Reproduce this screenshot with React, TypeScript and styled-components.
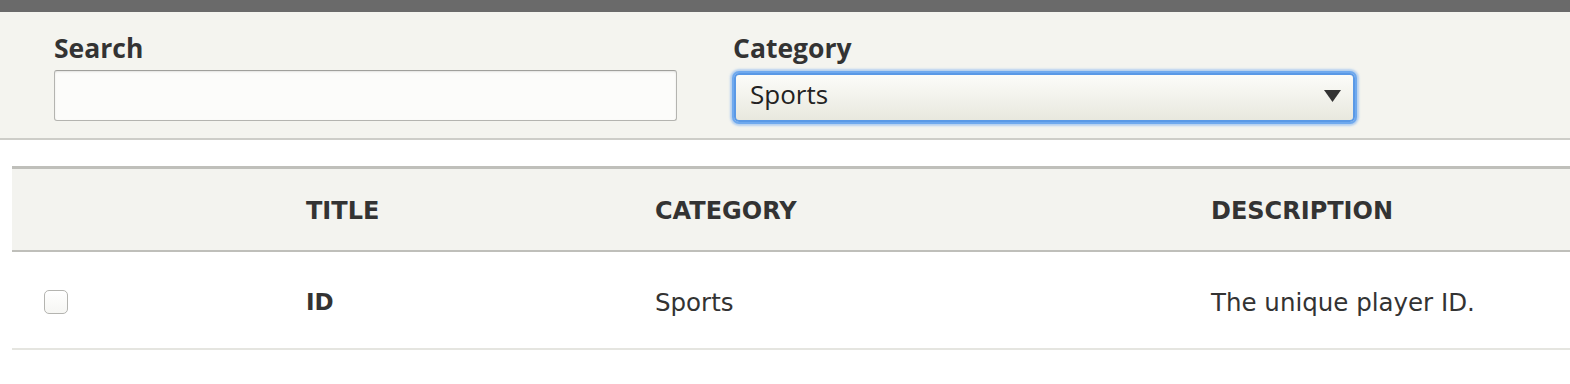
import React from "react";
import styled, { createGlobalStyle } from "styled-components";

const Global = createGlobalStyle`
  html, body { margin: 0; padding: 0; background: #ffffff; }
  body { font-family: "DejaVu Sans", sans-serif; color: #333333; }
  * { box-sizing: border-box; }
`;

const TopBar = styled.div`
  height: 12px;
  background: #6a6a6a;
`;

const Filters = styled.form`
  display: flex;
  align-items: flex-start;
  gap: 56px;
  background: #f4f4ef;
  padding: 20px 0 16px 54px;
  border-bottom: 2px solid #cdcdc8;
  height: 128px;
`;

const Field = styled.div<{ $width: number }>`
  display: flex;
  flex-direction: column;
  width: ${(p) => p.$width}px;
`;

const Label = styled.label`
  font-family: "Open Sans", sans-serif;
  font-weight: 700;
  font-size: 26.5px;
  line-height: 32px;
  color: #333333;
  margin-bottom: 6px;
`;

const TextInput = styled.input`
  height: 51px;
  width: 100%;
  border: 1px solid #b4b4b0;
  border-top-color: #a0a09c;
  border-radius: 3px;
  background: #fcfcfa;
  box-shadow: inset 0 1px 2px rgba(0, 0, 0, 0.1);
  font-family: "Open Sans", sans-serif;
  font-size: 26px;
  padding: 0 14px;
  outline: none;
`;

const SelectBox = styled.div`
  margin-top: 3px;
  margin-left: 1px;
  height: 49px;
  width: 621px;
  border: 2px solid #5a99e6;
  border-radius: 5px;
  background: linear-gradient(#fcfcf9, #e8e8de);
  box-shadow: 0 0 0 2px #6fa9ee, 0 0 2px 4px rgba(140, 185, 240, 0.6);
  display: flex;
  align-items: center;
  padding: 0 12px 0 14px;
  font-family: "Open Sans", sans-serif;
  font-size: 26px;
  color: #222222;
`;

const SelectValue = styled.span`
  flex: 1;
  line-height: 1;
  margin-top: -7px;
`;

const Arrow = styled.svg`
  width: 17px;
  height: 12px;
  margin-top: -4px;
`;

const Table = styled.div`
  margin: 26px 0 0 12px;
  border-top: 3px solid #bfbfba;
  width: calc(100% - 12px);
`;

const HeadRow = styled.div`
  display: grid;
  grid-template-columns: 294px 349px 556px 1fr;
  align-items: center;
  height: 83px;
  background: #f3f3ef;
  border-bottom: 2px solid #bfbfba;
  padding-top: 2px;
`;

const Th = styled.div`
  font-family: "DejaVu Sans", sans-serif;
  font-weight: 700;
  font-size: 24px;
  color: #333333;
  text-transform: uppercase;
`;

const BodyRow = styled.div`
  display: grid;
  grid-template-columns: 294px 349px 556px 1fr;
  align-items: center;
  height: 98px;
  border-bottom: 2px solid #e5e5e0;
  padding-top: 4px;
`;

const Td = styled.div<{ $bold?: boolean }>`
  font-family: "DejaVu Sans", sans-serif;
  font-size: ${(p) => (p.$bold ? "23px" : "24.5px")};
  font-weight: ${(p) => (p.$bold ? 700 : 400)};
  color: #333333;
`;

const CheckCell = styled.div`
  padding-left: 32px;
  display: flex;
  align-items: center;
`;

const Check = styled.span`
  width: 24px;
  height: 24px;
  border: 1px solid #b4b4b0;
  border-radius: 5px;
  background: linear-gradient(#ffffff, #f6f6f3);
  display: inline-block;
`;

export default function App() {
  return (
    <>
      <Global />
      <TopBar />
      <Filters onSubmit={(e) => e.preventDefault()}>
        <Field $width={623}>
          <Label htmlFor="search">Search</Label>
          <TextInput id="search" type="text" />
        </Field>
        <Field $width={625}>
          <Label>Category</Label>
          <SelectBox>
            <SelectValue>Sports</SelectValue>
            <Arrow viewBox="0 0 17 12">
              <path d="M0 0 H17 L8.5 12 Z" fill="#333333" />
            </Arrow>
          </SelectBox>
        </Field>
      </Filters>
      <Table>
        <HeadRow>
          <Th />
          <Th>Title</Th>
          <Th>Category</Th>
          <Th>Description</Th>
        </HeadRow>
        <BodyRow>
          <CheckCell>
            <Check />
          </CheckCell>
          <Td $bold>ID</Td>
          <Td>Sports</Td>
          <Td>The unique player ID.</Td>
        </BodyRow>
      </Table>
    </>
  );
}
